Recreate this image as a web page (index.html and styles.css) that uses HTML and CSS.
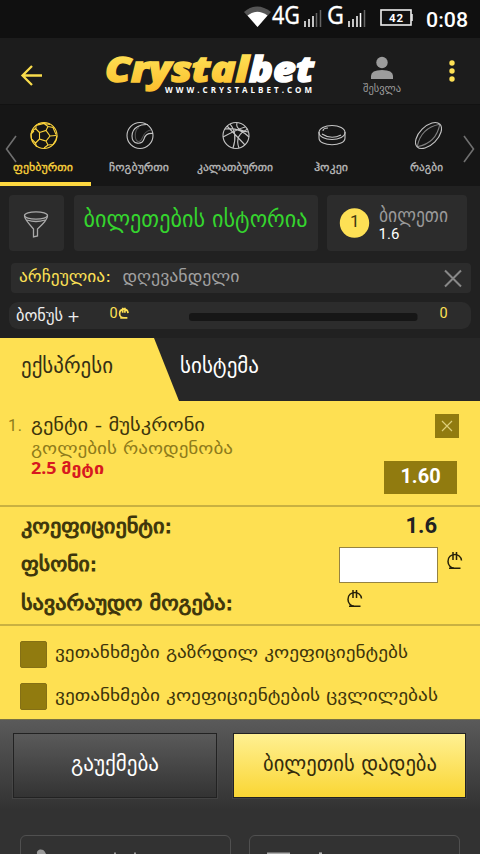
FILE: index.html
```html
<!DOCTYPE html>
<html lang="ka">
<head>
<meta charset="utf-8">
<title>Crystalbet</title>
<link rel="stylesheet" href="styles.css">
</head>
<body>
<div class="status">
  <svg width="228" height="38" viewBox="244 0 228 38">
    <path d="M244 12Q257 1 271 12L257.500 27Z" fill="#555"/><path d="M247.500 15.500Q257 8 267.500 15.500L257.500 27Z" fill="#fff"/>
    <text class="net" x="272" y="24" textLength="28" lengthAdjust="spacingAndGlyphs">4G</text>
    <path d="M305 21v6M309 19v8M313 16v11" stroke="#fff" stroke-width="1.500"/><path d="M316.500 13v14M320.500 10v17" stroke="#666" stroke-width="1.500"/>
    <text class="net" x="327" y="24" textLength="17" lengthAdjust="spacingAndGlyphs">G</text>
    <path d="M349 21v6M353 19v8M357 16v11M360.500 13v14" stroke="#fff" stroke-width="1.500"/><path d="M364.500 10v17" stroke="#666" stroke-width="1.500"/>
    <rect x="381" y="10" width="30" height="15" fill="none" stroke="#eee" stroke-width="1.600"/><path d="M412 14v7" stroke="#eee" stroke-width="1.500"/>
    <text class="batt" x="389" y="22" textLength="14">42</text>
    <text class="clock" x="426" y="27" textLength="42" lengthAdjust="spacingAndGlyphs">0:08</text>
  </svg>
</div>
<header class="header">
  <svg class="back" width="24" height="24"><path d="M12 2L2.500 11.500L12 21M3 11.500H22" fill="none" stroke="#f9dc4c" stroke-width="2.300"/></svg>
  <svg class="logo" width="214" height="48" viewBox="104 50 214 48">
    <defs><linearGradient id="gold" x1="0" y1="0" x2="0" y2="1"><stop offset="0" stop-color="#ffe95e"/><stop offset="1" stop-color="#fbbd2c"/></linearGradient></defs>
    <text class="brand" x="105" y="82" textLength="144" lengthAdjust="spacingAndGlyphs" fill="url(#gold)" stroke="url(#gold)">Crystal</text>
    <text class="brand" x="249" y="82" textLength="65" lengthAdjust="spacingAndGlyphs" fill="#fff" stroke="#fff">bet</text>
    <text class="site" x="165" y="93" textLength="147" lengthAdjust="spacing">WWW.CRYSTALBET.COM</text>
  </svg>
  <svg class="login" width="40" height="44" viewBox="362 54 40 44"><circle cx="382" cy="62.500" r="5.700"/><path d="M371 79v-3q0-6 11-6t11 6v3z"/><text class="caps" x="363" y="92" textLength="38" lengthAdjust="spacingAndGlyphs" font-size="11">შესვლა</text></svg>
  <svg class="more" width="6" height="22"><circle cx="3" cy="3" r="2.700"/><circle cx="3" cy="11" r="2.700"/><circle cx="3" cy="19" r="2.700"/></svg>
</header>
<nav class="sports">
  <a class="sport active"><svg width="64" height="60" viewBox="11 116 64 60"><g><circle cx="44" cy="135.500" r="13"/><path d="M39.500 132.500l6.500-2 4 5.500-4 5-6.500-2zM39.500 132.500l-4-4-4 3M46 130.500l2-4-4-3-8 2v3M50 136l6-.5M46 141l2 4-4 3M39.500 139l-4 4M48 126.500l5 1 3 7M35.500 143l-4-4-.5-5 3-3M35.500 143l1 4M48 145l5-.5 3-5 1-4M38 124l6-.5 6 1"/></g><text x="13" y="171" textLength="60" lengthAdjust="spacingAndGlyphs">ფეხბურთი</text></svg></a>
  <a class="sport"><svg width="64" height="60" viewBox="107 116 64 60"><g><circle cx="140" cy="135.500" r="13"/><path d="M148 124.500C141 124 132 127 132 136C132 145 142 145 144 139C145 135 148 133 153 133.500" /><path d="M139 127.500C134 130 134 142 139 141.500C144 141 141 131.500 151 130" opacity=".35"/></g><text x="109" y="171" textLength="60" lengthAdjust="spacingAndGlyphs">ჩოგბურთი</text></svg></a>
  <a class="sport"><svg width="80" height="60" viewBox="195 116 80 60"><g><circle cx="236" cy="135.500" r="13"/><path d="M227 126l18 19M230 124q8 9 3 24M225 129q14-2 24 8M223 137q15-8 22-10M237 123q-2 7 11 9M239 148q-5-13 9-19"/></g><text x="197" y="171" textLength="76" lengthAdjust="spacingAndGlyphs">კალათბურთი</text></svg></a>
  <a class="sport"><svg width="40" height="60" viewBox="311 116 40 60"><g><ellipse cx="332" cy="132.500" rx="13" ry="7"/><path d="M319 132v6c0 9 26 9 26 0v-6M322 134q9 6 19 1M323 131q0-3 5-3"/></g><text x="314" y="171" textLength="34" lengthAdjust="spacingAndGlyphs">ჰოკეი</text></svg></a>
  <a class="sport"><svg width="40" height="60" viewBox="408 116 40 60"><g transform="rotate(-45 429.500 135.500)"><ellipse cx="429.500" cy="135.500" rx="16" ry="9"/><path d="M413.500 135.500q16-11 32 0M413.500 135.500q16 11 32 0" opacity=".6"/></g><text x="411" y="171" textLength="33" lengthAdjust="spacingAndGlyphs">რაგბი</text></svg></a>
  <svg class="prev" width="12" height="30"><path d="M11 2L1.500 15L11 28"/></svg>
  <svg class="next" width="12" height="30"><path d="M1 2L10.500 15L1 28"/></svg>
</nav>
<main>
<section class="tools">
  <div class="top">
    <div class="card"><svg width="55" height="56" viewBox="9 195 55 56"><g fill="none" stroke="#aaa" stroke-width="1.300"><ellipse cx="36" cy="215.500" rx="11.500" ry="3.700"/><path d="M24.500 216q0 3 9 13v8l4-1v-7q10-9 10-13M27 220q9 3 18 0"/></g></svg></div>
    <div class="card"><svg width="244" height="56" viewBox="73 195 244 56"><text class="caps" x="82.500" y="226.500" font-size="24" textLength="224" lengthAdjust="spacingAndGlyphs" fill="#35d52e">ბილეთების ისტორია</text></svg></div>
    <div class="card"><svg width="140" height="56" viewBox="327 195 140 56"><circle cx="354.500" cy="223" r="14.700" fill="#fde055"/><text class="num" x="350" y="227" font-size="17" fill="#40380f">1</text><text class="caps" x="379" y="221.500" font-size="20" textLength="69" lengthAdjust="spacingAndGlyphs" fill="#999">ბილეთი</text><text class="num" x="378.500" y="239" font-size="15" fill="#fff">1.6</text></svg></div>
  </div>
  <div class="picked"><svg width="460" height="30" viewBox="11 263 460 30"><text x="19" y="282" font-size="16" textLength="92" lengthAdjust="spacingAndGlyphs" fill="#fde055">არჩეულია:</text><text x="122.500" y="282" font-size="16" textLength="117" lengthAdjust="spacingAndGlyphs" fill="#a0a0a0">დღევანდელი</text><path d="M445 270.500l16 16M461 270.500l-16 16" stroke="#888" stroke-width="2"/></svg></div>
  <div class="bonus"><svg width="462" height="27" viewBox="9 302 462 27"><text class="caps" x="16" y="321" font-size="16" textLength="47" lengthAdjust="spacingAndGlyphs" fill="#eee">ბონუს</text><text x="67" y="321.500" font-size="15" textLength="13" lengthAdjust="spacingAndGlyphs" fill="#eee">+</text><text class="num" x="109.500" y="318" font-size="14.500" fill="#fde055">0</text><use href="#lari" transform="translate(119 307.200) scale(.62)" stroke="#fde055" stroke-width="2.800"/><text class="num" x="439.500" y="318" font-size="14.500" fill="#fde055">0</text><rect x="189" y="313" width="228.500" height="8" rx="3" fill="#161616"/></svg></div>
</section>
<div class="tabs">
  <svg width="480" height="63" viewBox="0 338 480 63"><path d="M0 338H154L179 401H0Z" fill="#fee052"/><text class="caps" x="21" y="372.500" font-size="22" textLength="92" lengthAdjust="spacingAndGlyphs" fill="#342f14">ექსპრესი</text><text class="caps" x="180" y="372.500" font-size="22" textLength="79" lengthAdjust="spacingAndGlyphs" fill="#fff">სისტემა</text></svg>
</div>
<section class="slip">
  <div class="bet">
    <svg width="240" height="90" viewBox="0 401 240 90"><text x="8" y="431" class="dim num" font-size="16" textLength="14">1.</text><text x="31" y="431" font-size="18" textLength="174" lengthAdjust="spacingAndGlyphs">გენტი - მუსკრონი</text><text class="dim" x="31" y="454" font-size="16" textLength="202" lengthAdjust="spacingAndGlyphs">გოლების რაოდენობა</text><text class="outcome" x="31" y="474" textLength="73" lengthAdjust="spacingAndGlyphs">2.5 მეტი</text></svg>
    <div class="odds">
      <button class="remove"><svg width="12" height="12"><path d="M1 1l10 10M11 1L1 11" stroke="#ddce7a" stroke-width="1.200"/></svg></button>
      <div class="price">1.60</div>
    </div>
  </div>
  <div class="totals">
    <div class="line"><svg width="160" height="38"><text class="label" x="1" y="25" textLength="151" lengthAdjust="spacingAndGlyphs">კოეფიციენტი:</text></svg><strong class="total">1.6</strong></div>
    <div class="line"><svg width="160" height="38"><text class="label" x="1" y="25" textLength="76" lengthAdjust="spacingAndGlyphs">ფსონი:</text></svg><input class="stake" aria-label="ფსონი"><svg class="cur" width="16" height="19"><g id="lari" fill="none"><path d="M14.500 9.500C14 1.500 1 1.500 1 10.500C1 14.500 4 17 7 17M2 17.200H13.500M6 1V9M9.500 1V9"/></g></svg></div>
    <div class="line"><svg width="230" height="38"><text class="label" x="1" y="26" textLength="212" lengthAdjust="spacingAndGlyphs">სავარაუდო მოგება:</text></svg><svg class="cur win" width="16" height="19"><use href="#lari"/></svg></div>
  </div>
  <div class="agree">
    <label><i></i><svg width="400" height="27"><text x="0" y="17" font-size="16" textLength="353" lengthAdjust="spacingAndGlyphs">ვეთანხმები გაზრდილ კოეფიციენტებს</text></svg></label>
    <label><i></i><svg width="400" height="27"><text x="0" y="18" font-size="16" textLength="383" lengthAdjust="spacingAndGlyphs">ვეთანხმები კოეფიციენტების ცვლილებას</text></svg></label>
  </div>
</section>
<footer>
  <div class="actions">
    <button class="cancel"><svg width="88" height="34"><text class="caps" x="0" y="25" font-size="22" textLength="88" lengthAdjust="spacingAndGlyphs" fill="#fff">გაუქმება</text></svg></button>
    <button class="place"><svg width="174" height="34"><text class="caps" x="0" y="25" font-size="22" textLength="174" lengthAdjust="spacingAndGlyphs" fill="#342c0b">ბილეთის დადება</text></svg></button>
  </div>
  <div class="links">
    <div><svg width="209" height="18"><path d="M16 18c-1-5 6-6 8-2l1 2z" fill="#999"/><path d="M94 16.500v2M114 16.500v2" stroke="#bbb" stroke-width="1.500"/></svg></div>
    <div><svg width="209" height="18"><path d="M17 17.500h23" stroke="#aaa" stroke-width="2"/><path d="M69 17.200h3" stroke="#bbb" stroke-width="1.500"/></svg></div>
  </div>
</footer>
</main>
</body>
</html>
```
FILE: styles.css
```css
* { box-sizing: border-box; }
body { margin: 0; width: 480px; height: 854px; overflow: hidden; background: #212121; font-family: "DejaVu Sans", sans-serif; }
svg { display: block; flex: none; overflow: visible; }
button { padding: 0; border: 0; display: flex; align-items: center; justify-content: center; }
.caps { font-family: "DejaVu Sans", sans-serif; text-transform: uppercase; }
.num { font-family: Roboto, sans-serif; }

.status { height: 38px; background: #101010; display: flex; justify-content: flex-end; padding-right: 8px; fill: #fff; }
.net { font: 26px "Noto Sans", sans-serif; stroke: #fff; stroke-width: .3px; }
.batt { font: 700 11.5px Roboto, sans-serif; }
.clock { font: 500 21px Roboto, sans-serif; }

.header { height: 67px; background: #1c1c1c; border-bottom: 1px solid #121212; display: flex; align-items: flex-start; }
.back { margin: 26px 0 0 20px; }
.logo { margin: 12px 0 0 60px; }
.brand { font: italic 800 36px "Open Sans", sans-serif; stroke-width: 1.4px; }
.site { font: 700 8px "Open Sans", sans-serif; fill: #fff; }
.login { margin: 16px 0 0 44px; fill: #9c9c9c; }
.more { margin: 22px 0 0 47px; fill: #fde055; }

.sports { position: relative; height: 81px; background: #161616; display: flex; }
.sport { width: 96px; flex: none; padding-top: 11px; display: flex; justify-content: center; font-size: 11.5px; fill: #b9b9b9; }
.sport text { stroke: #b9b9b9; stroke-width: .3px; }
.sport.active text { stroke: #fdd43c; }
.sport:nth-child(1) { width: 91px; padding-right: 5px; }
.sport g { fill: none; stroke: #c5c5c5; stroke-width: 1.1; }
.sport.active { fill: #fdd43c; border-bottom: 4px solid #fed840; }
.sport.active g { stroke: #fdd43c; }
.prev, .next { position: absolute; top: 29px; fill: none; stroke: #707070; stroke-width: 1.6; }
.prev { left: 5px; }
.next { right: 5px; }

.tools { height: 152px; padding: 9px 9px 0; }
.top { display: flex; gap: 9.5px; height: 56px; }
.card { background: #2c2c2c; border-radius: 4px; }
.picked { margin: 12px 0 0 2px; width: 460px; height: 30px; background: #2c2c2c; border-radius: 4px; }
.bonus { margin-top: 9px; width: 462px; height: 27px; background: #2c2c2c; border-radius: 9px; }

.tabs { height: 63px; background: #272727; }
.slip { height: 318px; background: #fee052; fill: #3d350b; }
.bet { height: 106px; border-bottom: 2px solid #c9b141; display: flex; justify-content: space-between; padding-right: 21px; }
.dim { fill: #8e7b1b; }
.outcome { font: 700 16px "Noto Sans", "DejaVu Sans", sans-serif; fill: #d71920; }
.odds { padding-top: 13px; display: flex; flex-direction: column; align-items: flex-end; }
.remove { width: 24px; height: 24px; background: #917b0f; }
.price { width: 73px; height: 33px; margin: 23px 2px 0 0; background: #917b0f; color: #fff; font: 700 20px/31px Roboto, sans-serif; text-align: center; }
.totals { height: 119px; padding: 1px 17px 0 20px; border-bottom: 2px solid #c9b141; }
.line { height: 38px; display: flex; }
.label { font-size: 19.5px; stroke: #3d350b; stroke-width: .9px; }
.total { margin-left: auto; margin-right: 26px; font: 700 22px/36px Roboto, sans-serif; color: #222; }
.stake { margin: 1px 0 0 159px; width: 99px; height: 36px; border: 1.5px solid #958342; background: #fff; border-radius: 0; }
.cur { margin: 5px 0 0 9px; stroke: #252009; stroke-width: 1.5; }
.win { margin: 5px 0 0 97px; }
.agree { padding: 14.5px 0 0 20px; }
.agree label { display: flex; gap: 8px; margin-bottom: 15.5px; }
.agree i { width: 27px; height: 27px; border-radius: 2px; background: #917b0f; border: 1px solid #857015; flex: none; }

footer { height: 135px; border-top: 1px solid #777044; background: linear-gradient(#5a5a5a, #323232 90px); }
.actions { display: flex; gap: 16px; padding: 13px 0 0 13px; }
.actions button { height: 65px; border: 1px solid #222; outline: 1px solid #5556; }
.cancel { width: 204px; background: linear-gradient(#5a5a5a, #333); }
.place { width: 233px; background: linear-gradient(#fff092, #fad634); }
.actions svg { margin-top: -5px; }
.links { display: flex; gap: 18px; padding: 37px 20px 0; }
.links div { width: 211px; height: 40px; border: 1.5px solid #505050; border-radius: 6px; }
```
